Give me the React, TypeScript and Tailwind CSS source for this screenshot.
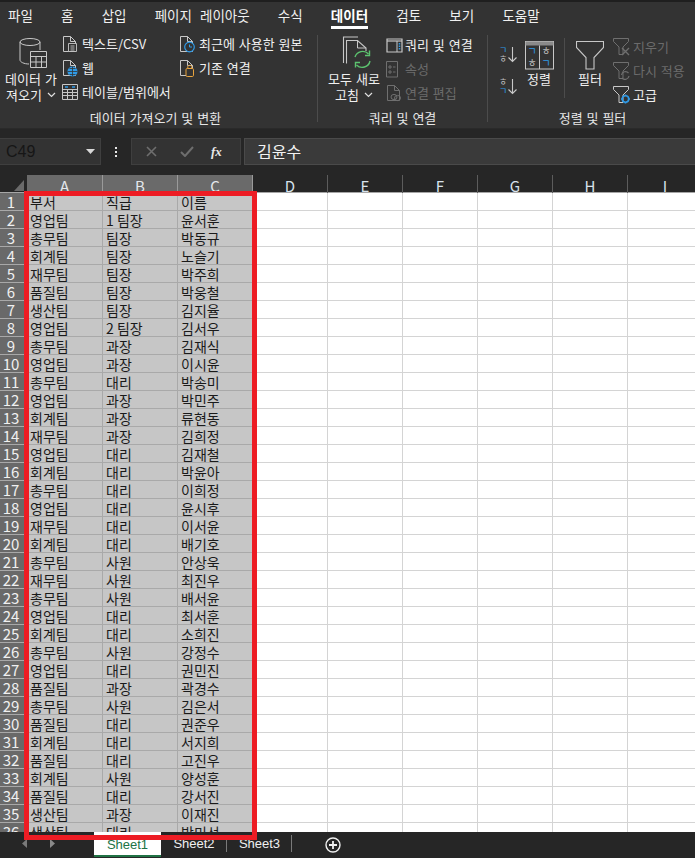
import React from 'react';

const tabs = ['파일', '홈', '삽입', '페이지 레이아웃', '수식', '데이터', '검토', '보기', '도움말'];

const rows = [
  ['부서', '직급', '이름'],
  ['영업팀', '1 팀장', '윤서훈'],
  ['총무팀', '팀장', '박동규'],
  ['회계팀', '팀장', '노슬기'],
  ['재무팀', '팀장', '박주희'],
  ['품질팀', '팀장', '박웅철'],
  ['생산팀', '팀장', '김지율'],
  ['영업팀', '2 팀장', '김서우'],
  ['총무팀', '과장', '김재식'],
  ['영업팀', '과장', '이시윤'],
  ['총무팀', '대리', '박송미'],
  ['영업팀', '과장', '박민주'],
  ['회계팀', '과장', '류현동'],
  ['재무팀', '과장', '김희정'],
  ['영업팀', '대리', '김재철'],
  ['회계팀', '대리', '박윤아'],
  ['총무팀', '대리', '이희정'],
  ['영업팀', '대리', '윤시후'],
  ['재무팀', '대리', '이서윤'],
  ['회계팀', '대리', '배기호'],
  ['총무팀', '사원', '안상욱'],
  ['재무팀', '사원', '최진우'],
  ['총무팀', '사원', '배서윤'],
  ['영업팀', '대리', '최서훈'],
  ['회계팀', '대리', '소희진'],
  ['총무팀', '사원', '강정수'],
  ['영업팀', '대리', '권민진'],
  ['품질팀', '과장', '곽경수'],
  ['총무팀', '사원', '김은서'],
  ['품질팀', '대리', '권준우'],
  ['회계팀', '대리', '서지희'],
  ['품질팀', '대리', '고진우'],
  ['회계팀', '사원', '양성훈'],
  ['품질팀', '대리', '강서진'],
  ['생산팀', '과장', '이재진'],
  ['생산팀', '대리', '박미선'],
];

const emptyCols = ['D', 'E', 'F', 'G', 'H', 'I', 'J', 'K'];
const gridCols = 'grid grid-cols-[27px_76px_75px_75px_75px_75px_75px_75px_75px_75px_75px]';

const LINE = '#c8c8c8';
const DIM = '#6f6f6f';
const BLUE = '#2f9be8';

const Chevron = () => (
  <svg width="9" height="6" viewBox="0 0 9 6" className="inline-block ml-[5px] mb-[2px]">
    <path d="M1 1 L4.5 4.5 L8 1" fill="none" stroke="#e0e0e0" strokeWidth="1.2" />
  </svg>
);

const FilePath = ({ color = LINE }: { color?: string }) => (
  <path d="M1.5 1.5 H8.5 L13.5 6.5 V16.5 H1.5 Z M8.5 1.5 V6.5 H13.5" fill="none" stroke={color} strokeWidth="1" />
);

const DataIcon = () => (
  <svg width="32" height="33" viewBox="0 0 32 33" className="ml-[6px]">
    <path d="M2 5 V23 C2 25 6 27 11 27 M22 5 V13" fill="none" stroke={LINE} />
    <ellipse cx="12" cy="5" rx="10" ry="3.5" fill="none" stroke={LINE} />
    <path d="M12.5 14.5 H28.5 V30.5 H12.5 Z M12.5 19.5 H28.5 M12.5 25 H28.5 M18 19.5 V30.5 M23.5 19.5 V30.5" fill="#333333" stroke={LINE} />
  </svg>
);

const TextFileIcon = () => (
  <svg width="17" height="18" viewBox="0 0 17 18">
    <FilePath />
    <path d="M6.5 8.5 H14.5 V16.5 H6.5 Z M8.5 11 H12.5 M8.5 13 H12.5 M8.5 15 H12.5" fill="#333333" stroke={LINE} strokeWidth="0.9" />
  </svg>
);

const WebIcon = () => (
  <svg width="17" height="18" viewBox="0 0 17 18">
    <FilePath />
    <circle cx="10.5" cy="12.5" r="5" fill={BLUE} />
    <path d="M5.5 12.5 H15.5 M10.5 7.5 V17.5 M7.5 9.5 H13.5 M7.5 15.5 H13.5" stroke="#333333" strokeWidth="0.8" />
  </svg>
);

const TableIcon = () => (
  <svg width="16" height="16" viewBox="0 0 16 16">
    <path d="M0.5 0.5 H15.5 V15.5 H0.5 Z M0.5 5.5 H15.5 M0.5 8.5 H15.5 M0.5 11.5 H15.5 M5.5 5.5 V15.5 M10.5 5.5 V15.5" fill="none" stroke={LINE} />
    <path d="M3 3 H6 M10 3 H13" stroke={BLUE} strokeWidth="1.5" />
  </svg>
);

const ClockFileIcon = () => (
  <svg width="17" height="18" viewBox="0 0 17 18">
    <FilePath />
    <circle cx="10.5" cy="12" r="4.8" fill="#333333" stroke={BLUE} strokeWidth="1.2" />
    <path d="M10.5 9.5 V12 H13" fill="none" stroke={BLUE} />
  </svg>
);

const LinkFileIcon = () => (
  <svg width="17" height="18" viewBox="0 0 17 18">
    <FilePath />
    <rect x="7" y="9.5" width="7.5" height="8" rx="1.2" fill="#333333" stroke="#e8a33d" />
    <path d="M8.8 9.5 V7.5 C8.8 6 12.7 6 12.7 7.5 V9.5" fill="none" stroke="#e8a33d" />
  </svg>
);

const QueryIcon = () => (
  <svg width="17" height="15" viewBox="0 0 17 15">
    <path d="M1 1 H16 V14 H1 Z" fill="none" stroke={LINE} strokeWidth="1.2" />
    <path d="M1 3 H16" stroke={LINE} strokeWidth="1.2" />
    <path d="M11 3 V14" stroke={LINE} />
    <path d="M13.5 5 V12.5" stroke={BLUE} strokeWidth="1.5" strokeDasharray="1.5 1" />
  </svg>
);

const PropertyIcon = () => (
  <svg width="13" height="17" viewBox="0 0 13 17">
    <path d="M0.5 0.5 H11.5 V16 H0.5 Z M3 5 H5 V7 H3 Z M3 10 H5 V12 H3 Z M7 6 H9.5 M7 11 H9.5" fill="none" stroke={DIM} />
  </svg>
);

const EditLinkIcon = () => (
  <svg width="16" height="18" viewBox="0 0 16 18">
    <FilePath color={DIM} />
    <ellipse cx="8" cy="13" rx="3" ry="2.6" fill="#333333" stroke={DIM} />
    <ellipse cx="11.5" cy="14" rx="3" ry="2.6" fill="none" stroke={DIM} />
  </svg>
);

const RefreshIcon = () => (
  <svg width="32" height="34" viewBox="0 0 32 34" className="ml-[7px]">
    <path d="M1.5 27 V1 H16 M4.5 27.5 V4.5 H15.5 L24 12 V15" fill="none" stroke={LINE} strokeWidth="1.1" />
    <path d="M15.5 4.5 V12 H24" fill="none" stroke={LINE} />
    <path d="M13 21 A8 8 0 0 1 26.5 18 M28 25 A8 8 0 0 1 14.5 29" fill="none" stroke="#5cc26f" strokeWidth="1.4" />
    <path d="M27.5 14.5 V19.5 H23 M13.5 31.5 V26.5 H18" fill="none" stroke="#5cc26f" strokeWidth="1.4" />
  </svg>
);

const SortSmallIcon = ({ flip }: { flip?: boolean }) => (
  <svg width="20" height="18" viewBox="0 0 20 18" fontFamily="'Noto Sans CJK KR', sans-serif" fontSize="9" className="overflow-visible">
    <text x="0" y="7" fill={flip ? '#bcbcbc' : BLUE}>{flip ? 'ㅎ' : 'ㄱ'}</text>
    <text x="0" y="16" fill={flip ? BLUE : '#bcbcbc'}>{flip ? 'ㄱ' : 'ㅎ'}</text>
    <path d="M13.5 1 V15.5 M9.5 11.5 L13.5 15.5 L17.5 11.5" fill="none" stroke={LINE} strokeWidth="1.1" />
  </svg>
);

const SortIcon = () => (
  <svg width="29" height="29" viewBox="0 0 29 29" fontFamily="'Noto Sans CJK KR', sans-serif" fontSize="10" className="overflow-visible">
    <rect x="0.5" y="0.5" width="28" height="27.5" fill="none" stroke={LINE} />
    <rect x="0.5" y="0.5" width="28" height="4" fill="#8a8a8a" />
    <path d="M14.5 4.5 V28" stroke={LINE} />
    <text x="2.5" y="14" fill={BLUE}>ㄱ</text>
    <text x="2.5" y="25.5" fill="#bcbcbc">ㅎ</text>
    <text x="16.5" y="14" fill="#bcbcbc">ㅎ</text>
    <text x="16.5" y="25.5" fill={BLUE}>ㄱ</text>
  </svg>
);

const FunnelIcon = () => (
  <svg width="28" height="29" viewBox="0 0 28 29">
    <path d="M0.5 0.5 H27.5 V6.5 L18 16.5 V28 H10 V16.5 L0.5 6.5 Z" fill="none" stroke={LINE} strokeWidth="1.1" />
  </svg>
);

const SmallFunnel = ({ color, children }: { color: string; children?: React.ReactNode }) => (
  <svg width="18" height="18" viewBox="0 0 18 18">
    <path d="M0.5 0.5 H15.5 V3.5 L10 9 V16.5 H6 V9 L0.5 3.5 Z" fill="none" stroke={color} />
    {children}
  </svg>
);

const ClearFilterIcon = () => (
  <SmallFunnel color={DIM}>
    <path d="M9 10 L16 17 M16 10 L9 17" stroke={DIM} strokeWidth="1.4" />
  </SmallFunnel>
);

const ReapplyIcon = () => (
  <SmallFunnel color={DIM}>
    <path d="M8.5 13 A4 4 0 0 1 15.5 11 M16 14 A4 4 0 0 1 9 16" fill="none" stroke={DIM} strokeWidth="1.2" />
  </SmallFunnel>
);

const AdvancedIcon = () => (
  <SmallFunnel color={LINE}>
    <circle cx="12.5" cy="13" r="3.2" fill="none" stroke={BLUE} strokeWidth="1.6" />
    <path d="M12.5 8.5 V10 M12.5 16 V17.5 M8 13 H9.5 M15.5 13 H17" stroke={BLUE} strokeWidth="1.6" />
  </SmallFunnel>
);

const SmallBtn = ({ icon, label, w = 20, dim }: { icon: React.ReactNode; label: string; w?: number; dim?: boolean }) => (
  <div className={`flex items-center h-[24px] whitespace-nowrap ${dim ? 'text-[#6b6b6b]' : 'text-[#f0f0f0]'}`}>
    <div style={{ width: w }} className="shrink-0 flex items-center">
      {icon}
    </div>
    <span>{label}</span>
  </div>
);

const BigBtn = ({ icon, lines, w, chevron }: { icon: React.ReactNode; lines: string[]; w: number; chevron?: boolean }) => (
  <div style={{ width: w }} className="shrink-0 flex flex-col items-center text-[#f0f0f0] leading-[16px] whitespace-nowrap">
    <div className="h-[38px] flex items-end justify-center pb-[1px]">{icon}</div>
    {lines.map((line, i) => (
      <div key={line}>
        {line}
        {chevron && i === lines.length - 1 && <Chevron />}
      </div>
    ))}
  </div>
);

const Group = ({ title, className, titleClass, children }: { title: string; className: string; titleClass?: string; children: React.ReactNode }) => (
  <div className={`flex flex-col shrink-0 ${className}`}>
    <div className="flex h-[79px]">{children}</div>
    <div className={`text-center text-[#e6e6e6] leading-[20px] ${titleClass ?? ''}`}>{title}</div>
  </div>
);

const Ribbon = () => (
  <div className="h-[100px] shrink-0 flex bg-[#333333] text-[13px] [word-spacing:1px] border-b border-[#2a2a2a]">
    <Group title="데이터 가져오기 및 변환" className="w-[317px]" titleClass="pr-[6px]">
      <div className="ml-[5px] mt-[4px]">
        <BigBtn icon={<DataIcon />} lines={['데이터 가', '져오기']} w={52} chevron />
      </div>
      <div className="ml-[5px] w-[117px] pt-[3px]">
        <SmallBtn icon={<TextFileIcon />} label="텍스트/CSV" />
        <SmallBtn icon={<WebIcon />} label="웹" />
        <SmallBtn icon={<TableIcon />} label="테이블/범위에서" />
      </div>
      <div className="pt-[3px]">
        <SmallBtn icon={<ClockFileIcon />} label="최근에 사용한 원본" />
        <SmallBtn icon={<LinkFileIcon />} label="기존 연결" />
      </div>
    </Group>
    <div className="w-px bg-[#4c4c4c] my-[6px]" />
    <Group title="쿼리 및 연결" className="w-[169px]">
      <div className="ml-[6px] mt-[4px]">
        <BigBtn icon={<RefreshIcon />} lines={['모두 새로', '고침']} w={60} chevron />
      </div>
      <div className="pt-[4px] pl-[2px]">
        <SmallBtn icon={<QueryIcon />} label="쿼리 및 연결" w={19} />
        <SmallBtn icon={<PropertyIcon />} label="속성" w={19} dim />
        <SmallBtn icon={<EditLinkIcon />} label="연결 편집" w={19} dim />
      </div>
    </Group>
    <div className="w-px bg-[#4c4c4c] my-[6px]" />
    <Group title="정렬 및 필터" className="w-[207px]" titleClass="pl-[2px]">
      <div className="ml-[11px] w-[20px] flex flex-col pt-[17px] gap-[14px]">
        <SortSmallIcon />
        <SortSmallIcon flip />
      </div>
      <div className="mt-[4px]">
        <BigBtn icon={<SortIcon />} lines={['정렬']} w={40} />
      </div>
      <div className="w-px bg-[#4c4c4c] h-[60px] mt-[9px] ml-[5px]" />
      <div className="ml-[5px] mt-[4px]">
        <BigBtn icon={<FunnelIcon />} lines={['필터']} w={40} />
      </div>
      <div className="pt-[6px] ml-[3px]">
        <SmallBtn icon={<ClearFilterIcon />} label="지우기" dim />
        <SmallBtn icon={<ReapplyIcon />} label="다시 적용" dim />
        <SmallBtn icon={<AdvancedIcon />} label="고급" />
      </div>
    </Group>
  </div>
);

const FormulaBar = () => (
  <div className="h-[46px] shrink-0 bg-[#262626] flex items-start pt-[9px]">
    <div className="w-[101px] h-[27px] bg-[#333333] border border-l-0 border-[#3f3f3f] flex items-center justify-between pl-[6px] pr-[5px] text-[16px] text-[#161616] font-['Liberation_Sans',sans-serif]">
      <span>C49</span>
      <svg width="9" height="5" viewBox="0 0 9 5">
        <path d="M0 0 H9 L4.5 5 Z" fill="#d8d8d8" />
      </svg>
    </div>
    <div className="w-[30px] h-[27px] flex flex-col items-center justify-center gap-[2px]">
      <span className="w-[2px] h-[2px] bg-[#e8e8e8]" />
      <span className="w-[2px] h-[2px] bg-[#e8e8e8]" />
      <span className="w-[2px] h-[2px] bg-[#e8e8e8]" />
    </div>
    <div className="w-[110px] h-[27px] bg-[#333333] border border-[#3f3f3f] flex items-center pl-[14px]">
      <svg width="11" height="11" viewBox="0 0 11 11">
        <path d="M1 1 L10 10 M10 1 L1 10" stroke="#6e6e6e" strokeWidth="1.6" />
      </svg>
      <svg width="14" height="11" viewBox="0 0 14 11" className="ml-[23px]">
        <path d="M1 6 L5 10 L13 1" fill="none" stroke="#6e6e6e" strokeWidth="2" />
      </svg>
      <span className="ml-[17px] text-[13px] italic font-bold text-[#e8e8e8] font-['Liberation_Serif',serif]">fx</span>
    </div>
    <div className="ml-[3px] flex-1 h-[27px] bg-[#3a3a3a] border border-r-0 border-[#4a4a4a] pl-[12px] text-[16px] leading-[24px] text-[#f2f2f2]">
      김윤수
    </div>
  </div>
);

const HeaderRow = () => (
  <div className={`${gridCols} h-[18px] shrink-0 bg-[#262626] border-b border-[#a6a6a6]`}>
    <div className="relative">
      <svg width="10" height="11" viewBox="0 0 10 11" className="absolute left-[14px] top-[5px]">
        <path d="M10 0 V11 H0 Z" fill="#6a6a6a" />
      </svg>
    </div>
    {['A', 'B', 'C'].map((col) => (
      <div key={col} className="bg-[#6a6a6a] border-r border-[#9a9a9a] text-center text-[15px] leading-[21px] text-[#e4e8ec]">
        {col}
      </div>
    ))}
    {emptyCols.map((col) => (
      <div key={col} className="border-r border-[#5c5c5c] text-center text-[15px] leading-[21px] text-[#d8e2ec]">
        {col === 'J' || col === 'K' ? '' : col}
      </div>
    ))}
  </div>
);

const Sheet = () => (
  <div className="flex-1 min-h-0 overflow-hidden bg-white">
    {rows.map((row, i) => (
      <div key={i} className={`${gridCols} h-[18px]`}>
        <div className="bg-[#696969] border-b border-[#a8a8a8] pr-[5px] pt-[1px] text-center text-[15px] leading-[16px] text-[#f0f0f0]">
          {i + 1}
        </div>
        {row.map((cell, j) => (
          <div
            key={j}
            className="bg-[#c6c6c6] border-b border-r border-[#a9a9a9] pl-[3px] pt-[1px] text-[14px] leading-[16px] text-[#1a1a1a] whitespace-nowrap"
          >
            {cell}
          </div>
        ))}
        {emptyCols.map((col) => (
          <div key={col} className="border-b border-r border-[#d4d4d4]" />
        ))}
      </div>
    ))}
  </div>
);

const SheetTabs = () => (
  <div className="h-[26px] shrink-0 bg-[#262626] flex items-start text-[13px] text-[#f0f0f0] font-['Liberation_Sans',sans-serif]">
    <div className="w-[94px] h-[23px] flex items-center pl-[22px] gap-[23px]">
      <svg width="5" height="9" viewBox="0 0 5 9">
        <path d="M5 0 V9 L0 4.5 Z" fill="#7a7a7a" />
      </svg>
      <svg width="5" height="9" viewBox="0 0 5 9">
        <path d="M0 0 V9 L5 4.5 Z" fill="#8a8a8a" />
      </svg>
    </div>
    <div className="w-[67px] h-[25px] bg-white border-b-2 border-[#217346] text-[#217346] text-center leading-[24px] pt-[1px]">
      Sheet1
    </div>
    <div className="w-[66px] h-[25px] pt-[1px] text-center leading-[22px] relative">
      Sheet2
      <span className="absolute right-0 top-[3px] w-px h-[17px] bg-[#7a7a7a]" />
    </div>
    <div className="w-[65px] h-[25px] pt-[1px] text-center leading-[22px] relative">
      Sheet3
      <span className="absolute right-0 top-[3px] w-px h-[17px] bg-[#7a7a7a]" />
    </div>
    <svg width="16" height="16" viewBox="0 0 16 16" className="ml-[33px] mt-[5px]">
      <circle cx="8" cy="8" r="7" fill="none" stroke="#f0f0f0" strokeWidth="1.4" />
      <path d="M8 4 V12 M4 8 H12" stroke="#f0f0f0" strokeWidth="1.8" />
    </svg>
  </div>
);

const App = () => {
  return (
    <div className="relative w-[695px] h-[858px] overflow-hidden flex flex-col bg-[#262626] font-['Noto_Sans_CJK_KR',sans-serif]">
      <div className="h-[29px] shrink-0 bg-[#333333] border-t-2 border-[#1f1f1f] flex gap-[28.2px] pl-[8px] text-[13.5px] [word-spacing:5px] leading-[27px] text-[#f0f0f0]">
        {tabs.map((tab) => (
          <div
            key={tab}
            className={tab === '데이터' ? 'h-[27px] font-bold text-white border-b-[3px] border-white' : 'h-[27px]'}
          >
            {tab}
          </div>
        ))}
      </div>
      <Ribbon />
      <FormulaBar />
      <HeaderRow />
      <Sheet />
      <SheetTabs />
      {/* red highlight box over columns A-C */}
      <div className="absolute left-[24px] top-[191px] w-[233px] h-[649px] border-[5px] border-[#ed1c24] pointer-events-none" />
    </div>
  );
};

export default App;
